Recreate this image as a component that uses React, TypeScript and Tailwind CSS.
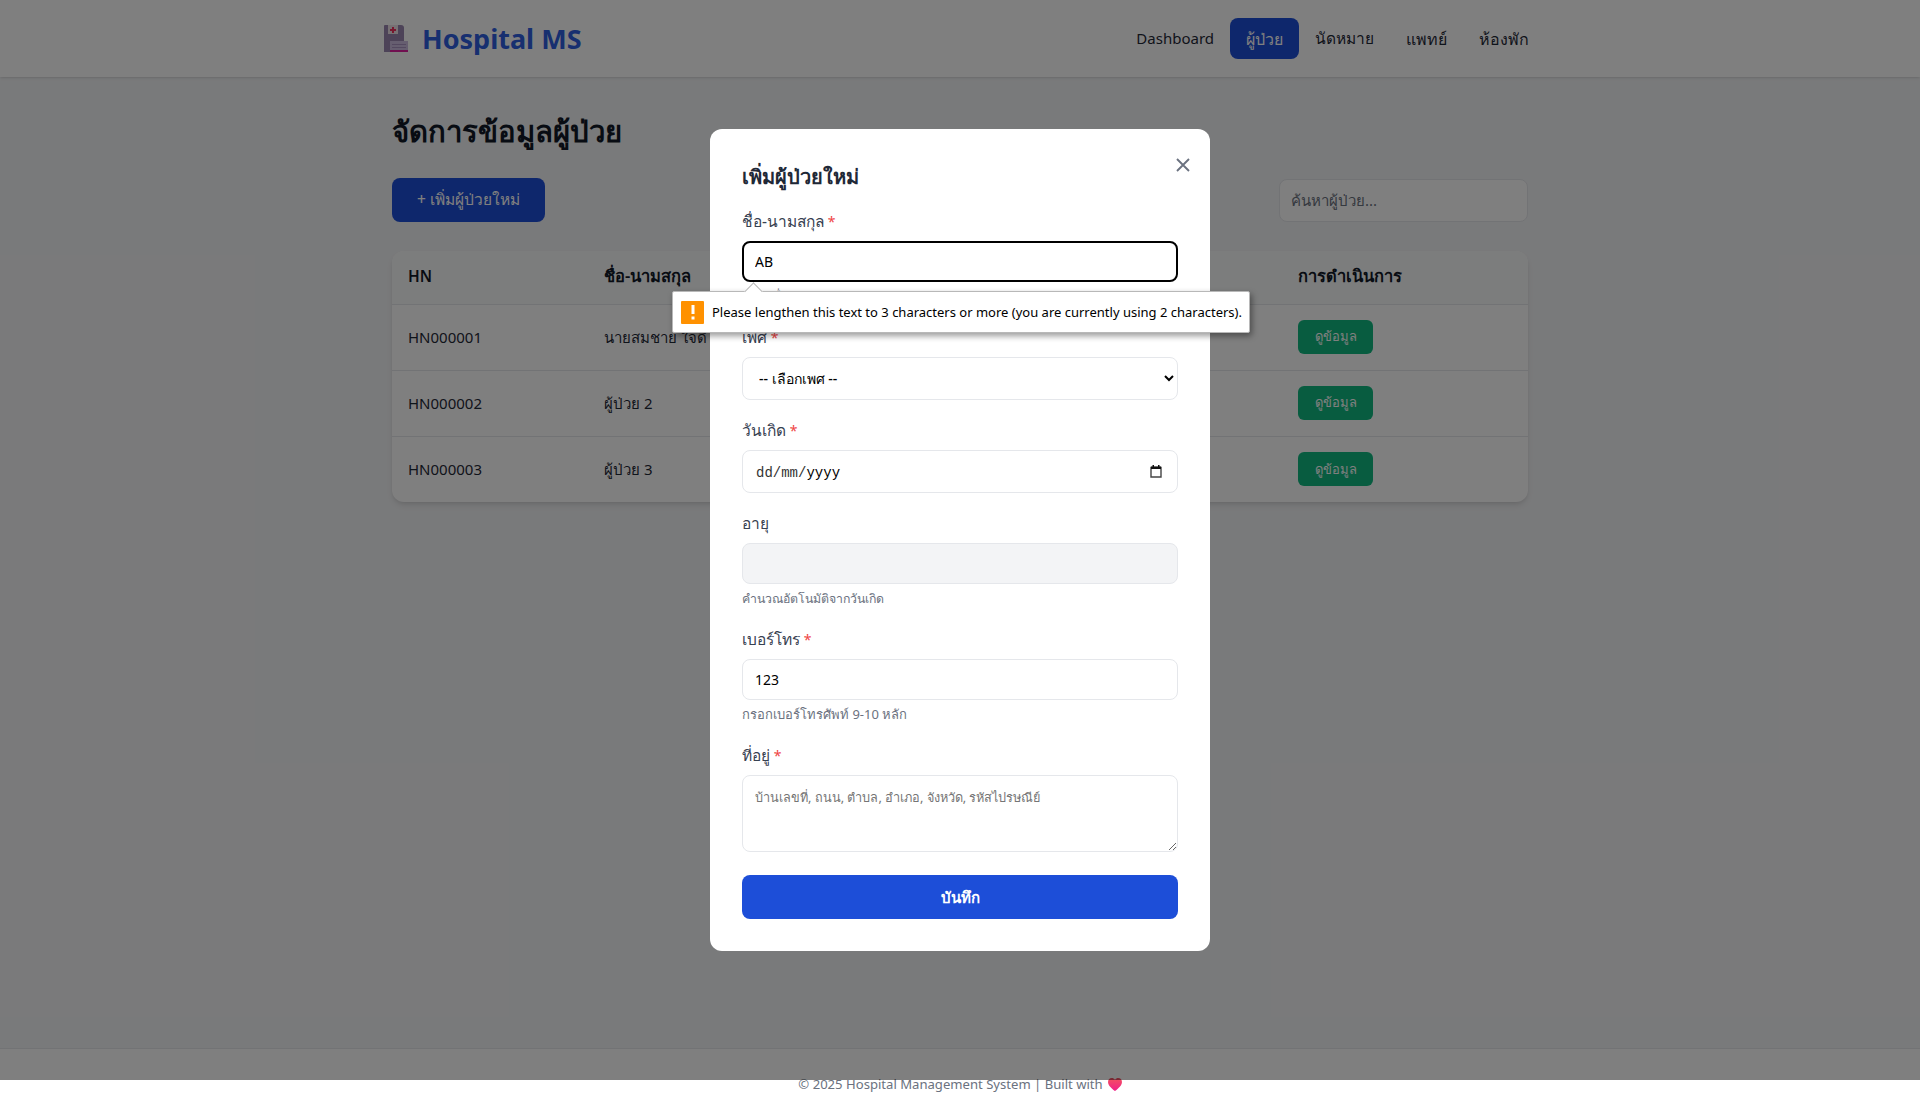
const font = "font-['Noto_Sans','Open_Sans',sans-serif]";

const navLinks = [
  { label: "Dashboard", size: "text-[15px]" },
  { label: "ผู้ป่วย", size: "text-[16px]" },
  { label: "นัดหมาย", size: "text-[15.5px]" },
  { label: "แพทย์", size: "text-[16px]" },
  { label: "ห้องพัก", size: "text-[16px]" },
];

const patients = [
  { hn: "HN000001", name: "นายสมชาย ใจดี", age: "35", phone: "0812345678" },
  { hn: "HN000002", name: "ผู้ป่วย 2", age: "28", phone: "0823456789" },
  { hn: "HN000003", name: "ผู้ป่วย 3", age: "41", phone: "0834567890" },
];

const Logo = () => (
  <svg width="24" height="27" viewBox="0 0 24 27" className="shrink-0">
    <path d="M1 0h16a3 3 0 0 1 3 3v24H0V1a1 1 0 0 1 1-1z" fill="#9a86b0" />
    <rect x="4" y="0" width="10" height="9" fill="#efe2e8" />
    <path d="M8 2h2v2h2v2h-2v2H8V6H6V4h2z" fill="#f0305f" />
    <rect x="6" y="16" width="18" height="11" fill="#cdbde0" />
    <rect x="8" y="19" width="14" height="1" fill="#a893c0" />
    <rect x="8" y="22" width="14" height="1" fill="#a893c0" />
    <rect x="6" y="25" width="18" height="2" fill="#e020a0" />
  </svg>
);

const Heart = () => (
  <svg width="14" height="13" viewBox="0 0 15 14">
    <defs>
      <linearGradient id="heartFill" x1="0" y1="0" x2="0" y2="1">
        <stop offset="0" stopColor="#f4525f" />
        <stop offset="1" stopColor="#f01f8a" />
      </linearGradient>
    </defs>
    <path d="M7.5 14C3 10.4 0 7.7 0 4.2 0 1.8 1.8 0 4 0c1.4 0 2.7.7 3.5 1.9C8.3.7 9.6 0 11 0c2.2 0 4 1.8 4 4.2 0 3.5-3 6.2-7.5 9.8z" fill="url(#heartFill)" />
  </svg>
);

const Label = ({ text, required }: { text: string; required?: boolean }) => (
  <label className="block h-[20px] text-[15.5px] leading-[20px] text-[#374151] mb-[10px]">
    {text}
    {required && <span className="text-[#ef4444] text-[14px]"> *</span>}
  </label>
);

const Hint = ({ text, size }: { text: string; size: string }) => (
  <p className={`mt-1 h-[21px] leading-[21px] text-[#6b7280] ${size}`}>{text}</p>
);

function PatientsPage() {
  return (
    <main className="flex-1 mx-auto w-[1136px] pt-[33px]">
      <h1 className="text-[29.3px] leading-[44px] font-bold text-[#111827] mb-[25px] mt-[-1px]">จัดการข้อมูลผู้ป่วย</h1>
      <div className="flex justify-between items-center mb-[29px]">
        <button className="h-[44px] w-[153px] rounded-lg bg-[#1d4ed8] text-white text-[15.5px] font-medium">
          + เพิ่มผู้ป่วยใหม่
        </button>
        <input
          readOnly
          placeholder="ค้นหาผู้ป่วย..."
          className="h-[43px] w-[249px] rounded-lg border border-[#e5e7eb] bg-white px-[11px] text-[15px] placeholder:text-[#6b7280]"
        />
      </div>
      <div className="rounded-xl bg-white shadow-md overflow-hidden">
        <table className="w-full table-fixed text-[15px] text-[#1f2937]">
          <thead>
            <tr className="h-[53px] bg-[#f9fafb] text-left text-[#111827] text-[16.5px]">
              <th className="w-[196px] pl-4 pb-[2px] font-semibold text-[15.5px]">HN</th>
              <th className="w-[300px] pl-4 pb-[2px] font-semibold">ชื่อ-นามสกุล</th>
              <th className="w-[200px] pl-4 pb-[2px] font-semibold">อายุ</th>
              <th className="w-[194px] pl-4 pb-[2px] font-semibold">เบอร์โทร</th>
              <th className="pl-4 pb-[2px] font-semibold">การดำเนินการ</th>
            </tr>
          </thead>
          <tbody>
            {patients.map((p) => (
              <tr key={p.hn} className="h-[66px] border-t border-[#e5e7eb]">
                <td className="pl-4">{p.hn}</td>
                <td className="pl-4">{p.name}</td>
                <td className="pl-4">{p.age}</td>
                <td className="pl-4">{p.phone}</td>
                <td className="pl-4">
                  <button className="h-[34px] w-[75px] rounded-md bg-[#10b981] text-white text-[13px] font-medium">ดูข้อมูล</button>
                </td>
              </tr>
            ))}
          </tbody>
        </table>
      </div>
    </main>
  );
}

function AddPatientModal() {
  const inputBase = "block w-full rounded-lg border border-[#e5e7eb] px-3 text-[14px] text-black bg-white";
  return (
    <div className="absolute top-0 left-0 w-full h-[1080px] bg-black/50 flex items-center justify-center">
      <div className="relative w-[500px] h-[822px] rounded-xl bg-white p-8">
        <button className="absolute top-[29px] right-[20px] w-[14px] h-[14px]">
          <svg width="14" height="14" viewBox="0 0 14 14" className="block">
            <path d="M1 1l12 12M13 1L1 13" stroke="#6b7280" strokeWidth="1.9" />
          </svg>
        </button>
        <h2 className="text-[20px] leading-[32px] font-semibold text-[#1f2937] mb-[18px]">เพิ่มผู้ป่วยใหม่</h2>

        <div className="relative mb-5">
          <Label text="ชื่อ-นามสกุล" required />
          <input readOnly value="AB" className="block w-full h-[41px] rounded-lg border-2 border-black px-[11px] text-[14px] text-black bg-white outline-none" />
          <Hint text="กรอกชื่อ-นามสกุล" size="text-[12.5px]" />
          {/* browser validation bubble */}
          <div className="absolute left-[-70px] top-[80px] z-10 h-[42px] w-[578px] flex items-center gap-[8px] bg-white border border-[#b8b8b8] rounded-[2px] pl-[8px] shadow-[2px_3px_6px_rgba(0,0,0,0.4)]">
            <div className="absolute left-[74px] top-[-7px] w-[13px] h-[13px] rotate-45 bg-white border-l border-t border-[#b8b8b8]" />
            <div className="w-[23px] h-[23px] shrink-0 rounded-[1px] bg-[#ff9100] flex items-center justify-center relative">
              <svg width="4" height="15" viewBox="0 0 4 15">
                <rect x="0.5" y="0" width="3" height="9" fill="white" />
                <rect x="0.5" y="11.5" width="3" height="3" fill="white" />
              </svg>
            </div>
            <span className="text-[13px] text-black whitespace-nowrap relative pt-[1px]">Please lengthen this text to 3 characters or more (you are currently using 2 characters).</span>
          </div>
        </div>

        <div className="mb-5">
          <Label text="เพศ" required />
          <select className={`${inputBase} h-[43px] text-[13px] font-medium`} defaultValue="">
            <option value="">-- เลือกเพศ --</option>
            <option value="m">ชาย</option>
            <option value="f">หญิง</option>
          </select>
        </div>

        <div className="mb-5">
          <Label text="วันเกิด" required />
          <div className={`${inputBase} h-[43px] flex items-center justify-between pl-[13px] pr-[15px]`}>
            <span className="font-['Liberation_Mono',monospace] text-[14px] text-[#333] pt-[3px]">
              dd/mm/<span className="text-black">yyyy</span>
            </span>
            <svg width="12" height="13" viewBox="0 0 12 13">
              <path d="M1 2.5h10v9.5H1z" fill="none" stroke="#444" strokeWidth="1.4" />
              <rect x="1" y="1.5" width="10" height="2.5" fill="#111" />
              <rect x="2.5" y="0" width="1.5" height="2" fill="#111" />
              <rect x="8" y="0" width="1.5" height="2" fill="#111" />
            </svg>
          </div>
        </div>

        <div className="mb-5">
          <Label text="อายุ" />
          <input readOnly className="block w-full h-[41px] rounded-lg border border-[#e5e7eb] bg-[#f3f4f6]" />
          <Hint text="คำนวณอัตโนมัติจากวันเกิด" size="text-[12.3px]" />
        </div>

        <div className="mb-5">
          <Label text="เบอร์โทร" required />
          <input readOnly value="123" className={`${inputBase} h-[41px]`} />
          <Hint text="กรอกเบอร์โทรศัพท์ 9-10 หลัก" size="text-[13px]" />
        </div>

        <div className="mb-[23px]">
          <Label text="ที่อยู่" required />
          <textarea
            readOnly
            placeholder="บ้านเลขที่, ถนน, ตำบล, อำเภอ, จังหวัด, รหัสไปรษณีย์"
            className="block w-full h-[77px] rounded-lg border border-[#e5e7eb] px-3 py-3 text-[12.7px] placeholder:text-[#757575]"
          />
        </div>

        <button className="block w-full h-[44px] rounded-lg bg-[#1d4ed8] text-white text-[15px] font-semibold">บันทึก</button>
      </div>
    </div>
  );
}

export default function App() {
  return (
    <div className={`relative min-h-[1119px] flex flex-col bg-[#f3f4f6] ${font}`}>
      <nav className="h-[77px] bg-white shadow-sm shrink-0">
        <div className="mx-auto w-[1152px] h-full flex items-center justify-between">
          <div className="flex items-center gap-[14px]">
            <Logo />
            <span className="text-[27px] font-bold text-[#2f5fe0] pt-[2px]">Hospital MS</span>
          </div>
          <div className="flex items-center mr-[-9px]">
            {navLinks.map((link) => (
              <a key={link.label} className={`h-[41px] px-4 flex items-center rounded-lg ${link.size} ${link.label === "ผู้ป่วย" ? "bg-[#1d4ed8] text-white font-medium" : "text-[#1f2937]"}`}>
                {link.label}
              </a>
            ))}
          </div>
        </div>
      </nav>

      <PatientsPage />

      <footer className="h-[71px] shrink-0 bg-white border-t border-[#e5e7eb] pt-[1px] flex items-center justify-center gap-[5px] text-[13.1px] text-[#6b7280]">
        <span>© 2025 Hospital Management System | Built with</span>
        <Heart />
      </footer>

      <AddPatientModal />
    </div>
  );
}
